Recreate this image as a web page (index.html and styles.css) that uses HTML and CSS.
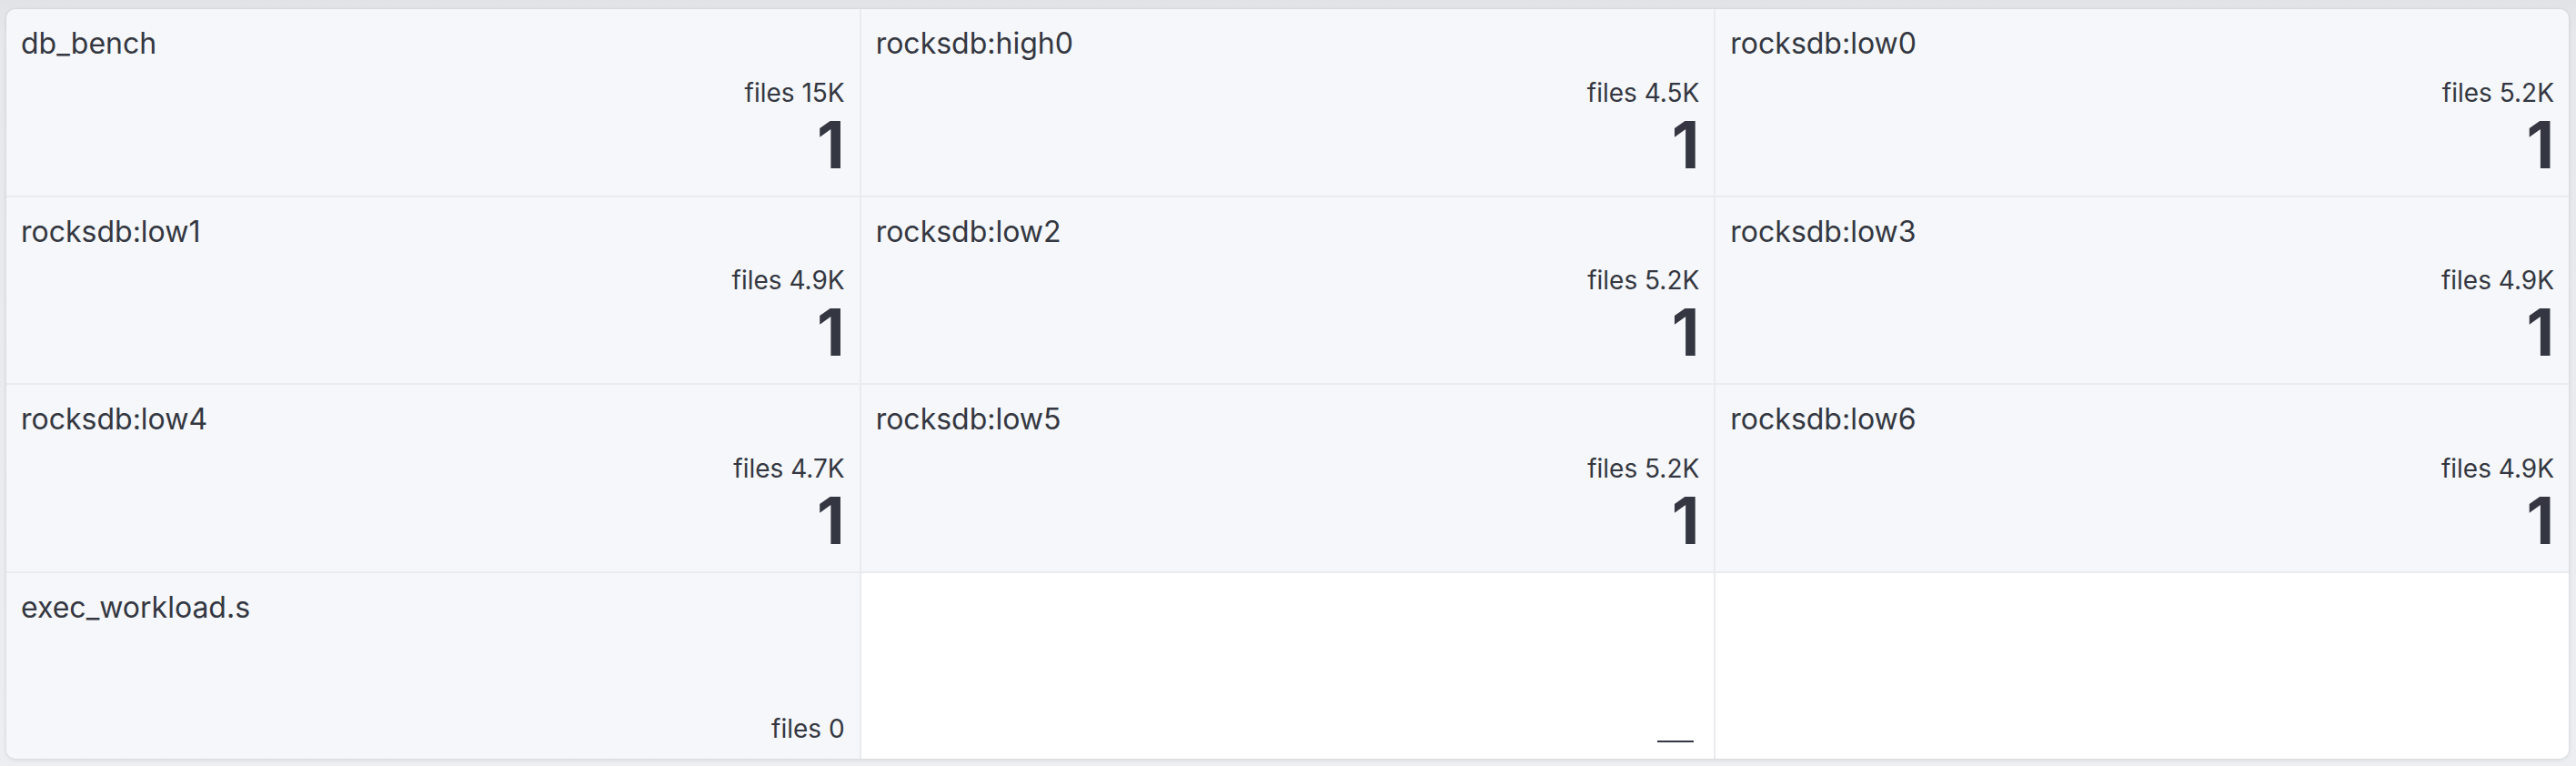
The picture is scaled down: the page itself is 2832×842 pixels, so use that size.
FILE: index.html
```html
<!DOCTYPE html>
<html>
<head>
<meta charset="utf-8">
<link rel="stylesheet" href="styles.css">
</head>
<body>
<div class="card">
  <div class="cell"><div class="title">db_bench</div><div class="meta">files 15K</div><div class="value">1</div></div>
  <div class="cell"><div class="title">rocksdb:high0</div><div class="meta">files 4.5K</div><div class="value">1</div></div>
  <div class="cell"><div class="title">rocksdb:low0</div><div class="meta">files 5.2K</div><div class="value">1</div></div>
  <div class="cell"><div class="title">rocksdb:low1</div><div class="meta">files 4.9K</div><div class="value">1</div></div>
  <div class="cell"><div class="title">rocksdb:low2</div><div class="meta">files 5.2K</div><div class="value">1</div></div>
  <div class="cell"><div class="title">rocksdb:low3</div><div class="meta">files 4.9K</div><div class="value">1</div></div>
  <div class="cell"><div class="title">rocksdb:low4</div><div class="meta">files 4.7K</div><div class="value">1</div></div>
  <div class="cell"><div class="title">rocksdb:low5</div><div class="meta">files 5.2K</div><div class="value">1</div></div>
  <div class="cell"><div class="title">rocksdb:low6</div><div class="meta">files 4.9K</div><div class="value">1</div></div>
  <div class="cell"><div class="title">exec_workload.s</div><div class="meta">files 0</div></div>
  <div class="cell empty"><div class="dash"></div></div>
  <div class="cell empty"></div>
</div>
</body>
</html>
```
FILE: styles.css
```css
html, body {
  margin: 0;
  padding: 0;
}
body {
  background: linear-gradient(#e2e3e6, #e7e8eb 40px, #eceef1);
  padding: 10px 8px 8px 7px;
  font-family: Inter, "Noto Sans", sans-serif;
  color: #343741;
  height: 842px;
  box-sizing: border-box;
}
.card {
  width: 2817px;
  height: 824px;
  border-radius: 10px;
  overflow: hidden;
  background: #e9ebef;
  display: grid;
  grid-template-columns: repeat(3, 1fr);
  grid-template-rows: repeat(4, 1fr);
  gap: 2px;
  box-shadow: 0 1px 5px rgba(0, 0, 0, 0.10), 0 0 2px rgba(0, 0, 0, 0.06);
}
.cell {
  background: #f5f7fa;
  padding: 19px 16px 16px 16px;
  display: flex;
  flex-direction: column;
  min-width: 0;
}
.cell.empty {
  background: #ffffff;
}
.title {
  font-size: 32px;
  line-height: 38px;
}
.meta {
  margin-top: auto;
  text-align: right;
  font-size: 28px;
  line-height: 34px;
}
.value {
  text-align: right;
  font-size: 71px;
  font-weight: 700;
  line-height: 80px;
}
.dash {
  margin-top: auto;
  align-self: flex-end;
  width: 40px;
  height: 2px;
  background: #343741;
  margin-right: 6px;
  margin-bottom: 2px;
}
```
